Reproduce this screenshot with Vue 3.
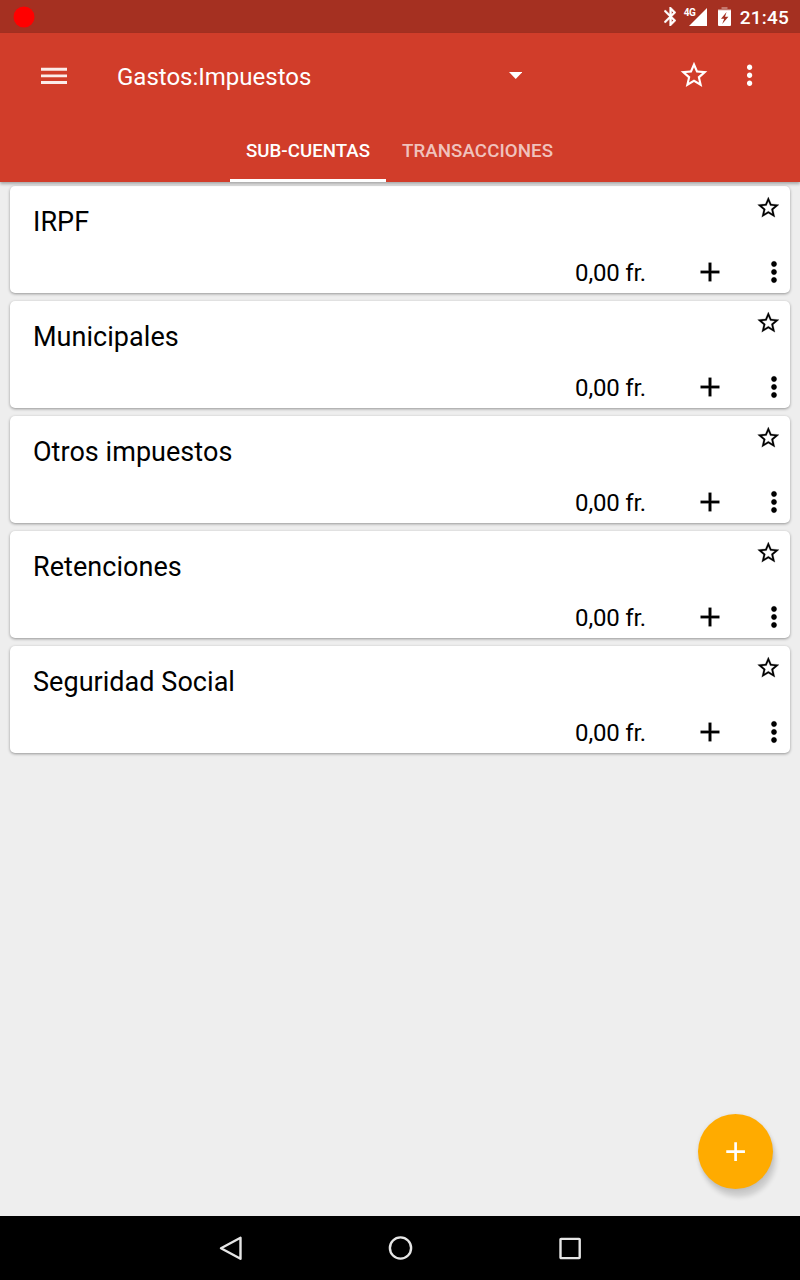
<script setup>
const accounts = ['IRPF', 'Municipales', 'Otros impuestos', 'Retenciones', 'Seguridad Social']
const starPath = 'M22 9.24l-7.19-.62L12 2 9.19 8.63 2 9.24l5.46 4.73L5.82 21 12 17.27 18.18 21l-1.63-7.03L22 9.24zM12 15.4l-3.76 2.27 1-4.28-3.32-2.88 4.38-.38L12 6.1l1.71 4.04 4.38.38-3.32 2.88 1 4.28L12 15.4z'
const dotsPath = 'M12 8c1.1 0 2-.9 2-2s-.9-2-2-2-2 .9-2 2 .9 2 2 2zm0 2c-1.1 0-2 .9-2 2s.9 2 2 2 2-.9 2-2-.9-2-2-2zm0 6c-1.1 0-2 .9-2 2s.9 2 2 2 2-.9 2-2-.9-2-2-2z'
const plusPath = 'M19 13h-6v6h-2v-6H5v-2h6V5h2v6h6v2z'
</script>

<template>
  <div class="screen">
    <div class="status">
      <svg class="record" viewBox="0 0 22 22"><circle cx="11" cy="11" r="10.5" fill="#f00" /></svg>
      <div class="indicators">
        <svg class="bluetooth" viewBox="5 2 12.71 20"><path fill="#fff" stroke="#fff" stroke-width=".5" d="M17.71 7.71L12 2h-1v7.59L6.41 5 5 6.41 10.59 12 5 17.59 6.41 19 11 14.41V22h1l5.71-5.71-4.3-4.29 4.3-4.29zM13 5.83l1.88 1.88L13 9.59V5.83zm1.88 10.46L13 18.17v-3.76l1.88 1.88z" /></svg>
        <div class="signal">
          <span class="network">4G</span>
          <svg class="triangle" viewBox="0 0 18 18"><path fill="#fff" d="M18 0v18H0z" /></svg>
        </div>
        <svg class="battery" viewBox="0 0 13 19">
          <path fill="#fff" fill-opacity=".35" d="M3.5 0h6v2H13v2H0V2h3.5z" />
          <path fill="#fff" fill-rule="evenodd" d="M0 3.2h13V18q0 1-1 1H1q-1 0-1-1zM8.6 5L3 11.8h3.2l-2 5.2L10.4 9.8H7z" />
        </svg>
        <span class="clock">21:45</span>
      </div>
    </div>
    <header class="header">
      <div class="toolbar">
        <svg class="burger" viewBox="0 0 26 18"><path stroke="#fff" stroke-opacity=".9" stroke-width="2.9" d="M0 2.3h26M0 8.9h26M0 15.5h26" /></svg>
        <div class="picker">
          <span class="title">Gastos:Impuestos</span>
          <svg class="caret" viewBox="0 0 13.4 7"><path fill="#fff" d="M0 0h13.4L6.7 7z" /></svg>
        </div>
        <svg class="icon" viewBox="0 0 24 24"><path fill="#fff" :d="starPath" /></svg>
        <svg class="icon menu" viewBox="0.3 -0.2 24 24"><path fill="#fff" :d="dotsPath" /></svg>
      </div>
      <nav class="tabs">
        <div class="tab active">SUB-CUENTAS</div>
        <div class="tab">TRANSACCIONES</div>
      </nav>
    </header>
    <main class="content">
      <article v-for="name in accounts" :key="name" class="card">
        <div class="top">
          <span class="name">{{ name }}</span>
          <svg class="star" viewBox="-0.5 0.2 24 24"><path :d="starPath" stroke="#000" stroke-width=".2" /></svg>
        </div>
        <div class="bottom">
          <span class="balance">0,00 fr.</span>
          <svg class="icon add" viewBox="0 0 24 24"><path :d="plusPath" stroke="#000" stroke-width=".2" /></svg>
          <svg class="icon more" viewBox="0 0 24 24"><path :d="dotsPath" stroke="#000" stroke-width=".25" /></svg>
        </div>
      </article>
      <button class="fab"><svg class="icon" viewBox="0.3 0.3 24 24"><path fill="#fff" :d="plusPath" /></svg></button>
    </main>
    <footer class="navbar">
      <svg class="nav" viewBox="0 0 26 26"><path d="M22.5 2.8v21L3 13.3z" /></svg>
      <svg class="nav" viewBox="0 0 26 26"><circle cx="12.5" cy="13" r="10.6" /></svg>
      <svg class="nav" viewBox="0 0 26 26"><rect x="2.5" y="3.9" width="19.2" height="19.2" rx=".6" /></svg>
    </footer>
  </div>
</template>

<style>
body {
  margin: 0;
  overflow: hidden;
}
</style>

<style scoped>
.screen {
  width: 800px;
  height: 1280px;
  display: flex;
  flex-direction: column;
  overflow: hidden;
  background: #eee;
  font-family: Roboto, sans-serif;
  color: #000;
}
svg {
  display: block;
  flex: none;
}
.icon {
  width: 32px;
  height: 32px;
}
.status {
  box-sizing: border-box;
  height: 33px;
  flex: none;
  display: flex;
  align-items: center;
  justify-content: space-between;
  padding: 0 11px 0 13px;
  background: #a53021;
}
.record {
  width: 22px;
  height: 22px;
}
.indicators {
  display: flex;
  align-items: center;
  color: #fff;
}
.bluetooth {
  width: 12px;
  height: 19px;
}
.signal {
  display: flex;
  align-items: flex-start;
  margin-left: 8px;
}
.network {
  width: 5px;
  font-size: 10px;
  line-height: 10px;
  font-weight: 700;
  letter-spacing: -.5px;
  white-space: nowrap;
}
.triangle {
  width: 18px;
  height: 18px;
}
.battery {
  width: 13px;
  height: 19px;
  margin-left: 11px;
}
.clock {
  margin-left: 9px;
  font-size: 19px;
  letter-spacing: .2px;
  font-weight: 500;
  line-height: 22px;
  padding-top: 2px;
}
.header {
  height: 149px;
  flex: none;
  position: relative;
  z-index: 1;
  background: #d13d2a;
  color: #fff;
  box-shadow: 0 2px 3px rgba(0, 0, 0, .3);
}
.toolbar {
  height: 85px;
  display: flex;
  align-items: center;
  padding: 0 34.5px 0 41px;
}
.toolbar .icon {
  margin-bottom: 1px;
}
.burger {
  width: 26px;
  height: 18px;
}
.picker {
  width: 405px;
  margin-left: 50px;
  margin-right: auto;
  display: flex;
  align-items: center;
  justify-content: space-between;
}
.title {
  font-size: 24px;
  line-height: 30px;
  padding-top: 2px;
}
.caret {
  width: 13.4px;
  height: 7px;
}
.menu {
  margin-left: 23.5px;
}
.tabs {
  height: 64px;
  display: flex;
  padding-left: 230px;
}
.tab {
  box-sizing: border-box;
  height: 64px;
  padding: 4px 16px 0;
  border-bottom: 3px solid transparent;
  display: flex;
  align-items: center;
  font-size: 18.67px;
  letter-spacing: .1px;
  font-weight: 500;
  white-space: nowrap;
  color: rgba(255, 255, 255, .7);
}
.active {
  width: 156px;
  letter-spacing: .03px;
  color: #fff;
  border-color: #fff;
}
.content {
  flex: 1;
  display: flex;
  flex-direction: column;
  gap: 8px;
  padding: 4px 10px 0;
  position: relative;
}
.card {
  box-sizing: border-box;
  height: 107px;
  display: flex;
  flex-direction: column;
  justify-content: space-between;
  background: #fff;
  border-radius: 5px;
  box-shadow: 0 1px 3px rgba(0, 0, 0, .38);
  padding: 9px 0 5px 23px;
}
.top {
  display: flex;
  justify-content: space-between;
  align-items: flex-start;
  padding-right: 9px;
}
.name {
  font-size: 27px;
  letter-spacing: .04px;
  line-height: 32px;
  padding-top: 11px;
}
.star {
  width: 25.6px;
  height: 25.6px;
}
.bottom {
  display: flex;
  align-items: center;
}
.balance {
  margin-left: auto;
  font-size: 24px;
  letter-spacing: -.2px;
  line-height: 28px;
  padding-top: 2px;
}
.add {
  margin-left: 48px;
}
.more {
  margin-left: 32px;
}
.fab {
  position: absolute;
  right: 27px;
  bottom: 27px;
  width: 75px;
  height: 75px;
  border: 0;
  border-radius: 50%;
  background: #ffab00;
  display: flex;
  align-items: center;
  justify-content: center;
  padding: 0;
  box-shadow: 3px 8px 5px rgba(0, 0, 0, .14), 0 1px 4px rgba(0, 0, 0, .1);
}
.navbar {
  height: 64px;
  flex: none;
  display: flex;
  align-items: center;
  justify-content: center;
  gap: 144px;
  padding-left: 1px;
  background: #000;
}
.nav {
  width: 26px;
  height: 26px;
  fill: none;
  stroke: #e6e6e6;
  stroke-width: 2.4;
  stroke-linejoin: round;
}
</style>
